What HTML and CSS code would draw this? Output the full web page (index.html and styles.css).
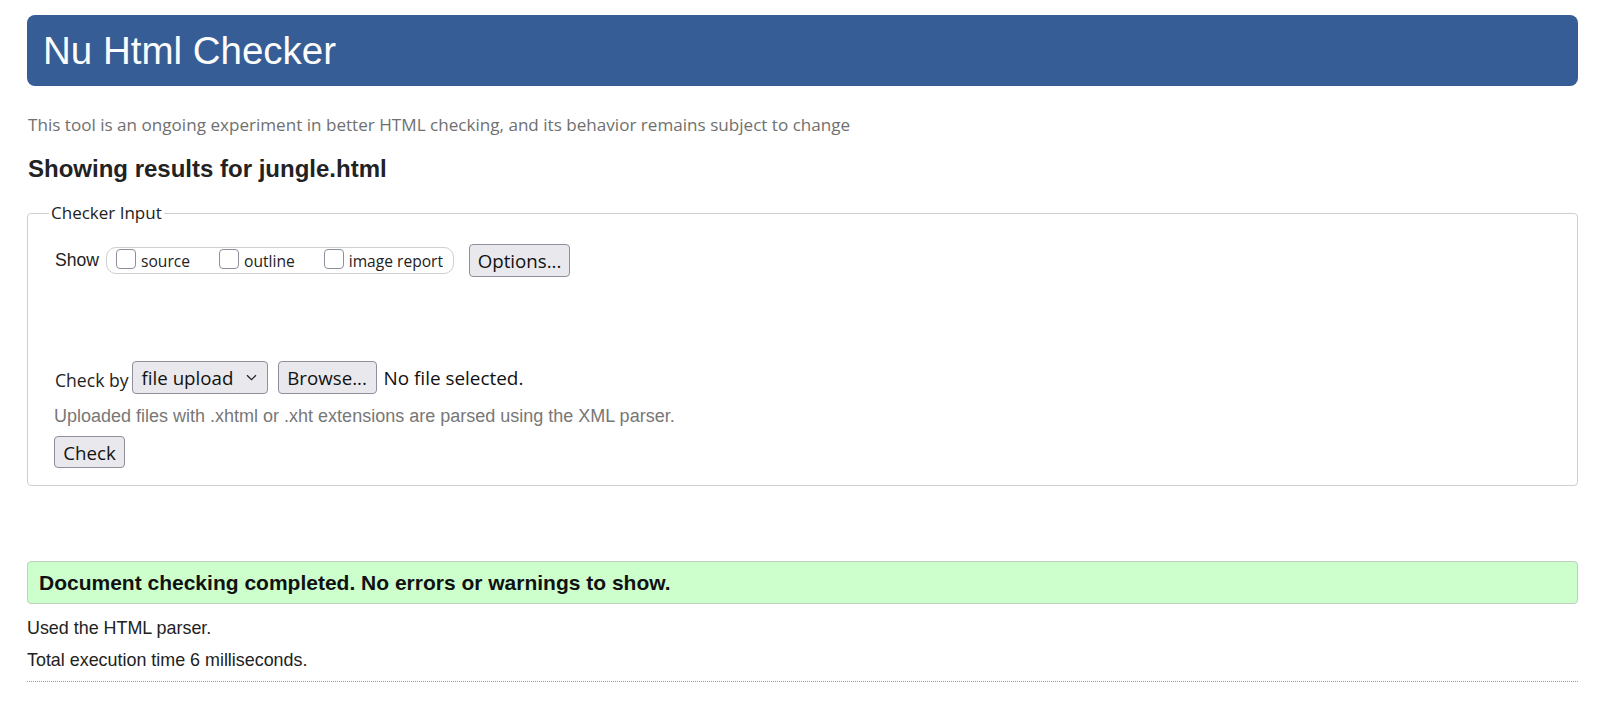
FILE: index.html
```html
<!DOCTYPE html>
<html lang="en">
<head>
<meta charset="utf-8">
<title>Showing results for jungle.html - Nu Html Checker</title>
<link rel="stylesheet" href="styles.css">
</head>
<body>
<div class="page">
  <h1 class="banner">Nu Html Checker</h1>
  <p class="about">This tool is an ongoing experiment in better HTML checking, and its behavior remains subject to change</p>
  <h2 class="results-title">Showing results for jungle.html</h2>

  <fieldset class="input-box">
    <legend class="input-legend">Checker Input</legend>
    <div class="input-body">
      <div class="show-row">
        <span class="show-label">Show</span>
        <span class="show-group">
          <label class="opt"><input type="checkbox" class="cb">source</label>
          <label class="opt"><input type="checkbox" class="cb">outline</label>
          <label class="opt"><input type="checkbox" class="cb">image report</label>
        </span>
        <button class="btn btn-options" type="button">Options...</button>
      </div>

      <div class="check-row">
        <span class="check-by">Check by</span>
        <span class="select">file upload
          <svg class="chev" width="11" height="7" viewBox="0 0 11 7"><path d="M1 1.2 L5.5 5.6 L10 1.2" fill="none" stroke="#222" stroke-width="1.3"/></svg>
        </span>
        <button class="btn btn-browse" type="button">Browse...</button>
        <span class="nofile">No file selected.</span>
      </div>
      <p class="hint">Uploaded files with .xhtml or .xht extensions are parsed using the XML parser.</p>
      <button class="btn btn-check" type="button">Check</button>
    </div>
  </fieldset>

  <p class="success">Document checking completed. No errors or warnings to show.</p>
  <p class="details">Used the HTML parser.</p>
  <p class="details">Total execution time 6 milliseconds.</p>
  <hr class="rule">
</div>
</body>
</html>
```

FILE: styles.css
```css
html, body {
  margin: 0;
  padding: 0;
  background: #ffffff;
}

body {
  font-family: "Liberation Sans", Arial, sans-serif;
  color: #222222;
}

.page {
  padding: 15px 29px 0 27px;
}

.banner {
  margin: 0;
  height: 71px;
  line-height: 71px;
  padding: 0 0 0 16px;
  background: #365d95;
  color: #fcfcfc;
  border-radius: 8px;
  font-family: "Liberation Sans", Arial, sans-serif;
  font-size: 38.5px;
  font-weight: normal;
}

.about {
  margin: 27px 0 0 1px;
  font-family: "Open Sans", "Noto Sans", sans-serif;
  font-size: 17.1px;
  line-height: 24px;
  color: #707070;
}

.results-title {
  margin: 17px 0 0 1px;
  font-size: 24px;
  line-height: 30px;
  font-weight: bold;
  color: #222222;
}

.input-box {
  margin: 18px 0 0 0;
  padding: 0;
  border: 1px solid #cfcfcf;
  border-radius: 4px;
  min-width: 0;
}

.input-legend {
  margin-left: 21px;
  padding: 0 2px;
  font-family: "Open Sans", "Noto Sans", sans-serif;
  font-size: 17px;
  line-height: 22px;
  color: #222222;
}

.input-body {
  padding: 20px 26px 17px 26px;
}

.show-row {
  display: flex;
  align-items: center;
  height: 33px;
}

.show-label {
  font-size: 17.6px;
  margin-right: 7px;
  margin-left: 1px;
}

.show-group {
  display: flex;
  align-items: center;
  box-sizing: border-box;
  height: 27px;
  width: 348px;
  padding: 0 0 0 9px;
  border: 1px solid #cfcfcf;
  border-radius: 10px;
  font-family: "Open Sans", "Noto Sans", sans-serif;
  font-size: 15.6px;
}

.opt {
  display: flex;
  align-items: center;
  margin-right: 29px;
}

.opt:last-child {
  margin-right: 0;
}

.cb {
  -webkit-appearance: none;
  appearance: none;
  box-sizing: border-box;
  width: 20px;
  height: 20px;
  margin: 0 5px 4px 0;
  border: 1px solid #8f8f9d;
  border-radius: 4px;
  background: #ffffff;
}

.btn {
  box-sizing: border-box;
  height: 33px;
  padding: 0 7px;
  margin: 0;
  border: 1px solid #8f8f9d;
  border-radius: 4px;
  background: #e9e9ed;
  color: #111111;
  font-family: "Open Sans", "Noto Sans", sans-serif;
  font-size: 18.7px;
  line-height: 31px;
}

.btn-options {
  margin-left: 15px;
  width: 101px;
}

.check-row {
  display: flex;
  align-items: center;
  height: 33px;
  margin-top: 84px;
}

.check-by {
  font-family: "Open Sans", "Noto Sans", sans-serif;
  font-size: 17.6px;
  color: #222222;
  margin-right: 3px;
  margin-left: 1px;
  padding-top: 4px;
}

.select {
  box-sizing: border-box;
  display: flex;
  align-items: center;
  justify-content: space-between;
  width: 136px;
  height: 33px;
  padding: 0 10px 0 9px;
  border: 1px solid #8f8f9d;
  border-radius: 4px;
  background: #e9e9ed;
  font-family: "Open Sans", "Noto Sans", sans-serif;
  font-size: 18.7px;
  color: #111111;
}

.chev {
  display: block;
}

.btn-browse {
  margin-left: 10px;
  width: 99px;
}

.nofile {
  margin-left: 7px;
  font-family: "Open Sans", "Noto Sans", sans-serif;
  font-size: 18.9px;
  color: #111111;
}

.hint {
  margin: 11px 0 0 0;
  font-size: 18px;
  line-height: 23px;
  color: #777777;
}

.btn-check {
  display: block;
  margin-top: 8px;
  width: 71px;
  height: 32px;
}

.success {
  box-sizing: border-box;
  margin: 75px 0 0 0;
  height: 43px;
  padding: 0 0 0 11px;
  line-height: 42px;
  background: #ccffcc;
  border: 1px solid #bfcfbf;
  border-radius: 4px;
  font-size: 21px;
  font-weight: bold;
  color: #111111;
}

.details {
  margin: 0;
  font-size: 17.9px;
  line-height: 32px;
  color: #222222;
}

.success + .details {
  margin-top: 8px;
}

.rule {
  margin: 5px 0 0 0;
  border: 0;
  border-top: 1px dotted #9a9a9a;
  height: 0;
}
```
